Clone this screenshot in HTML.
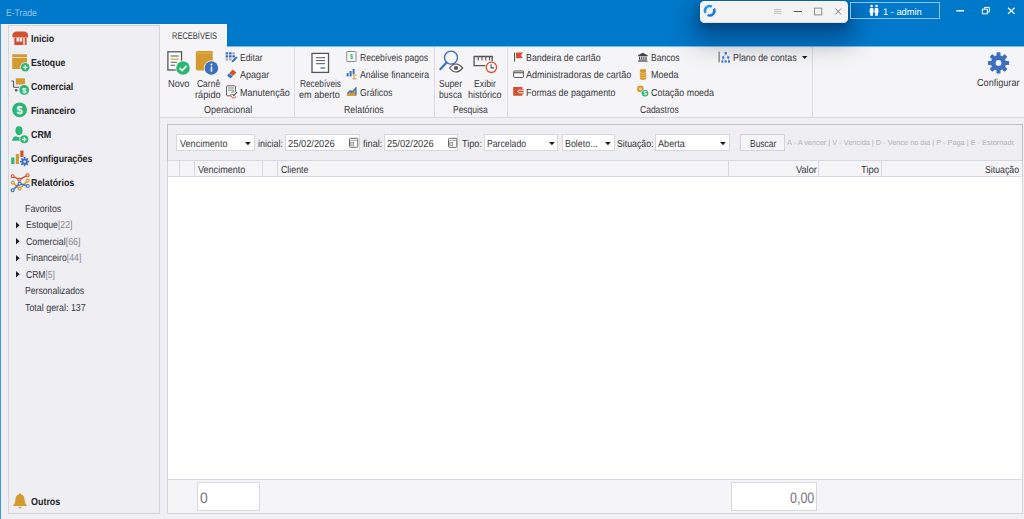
<!DOCTYPE html><html lang="pt-BR"><head><meta charset="utf-8"><title>E-Trade</title><style>

html,body{margin:0;padding:0}
body{width:1024px;height:519px;overflow:hidden;background:#f0eff4;position:relative;font-family:"Liberation Sans",sans-serif;color:#38383d}
#app div,#app span.t,#app svg{position:absolute;box-sizing:border-box}
#app{position:absolute;left:0;top:0;width:1024px;height:519px;overflow:hidden}
span.t{text-rendering:geometricPrecision;white-space:nowrap;line-height:14px;height:14px;transform-origin:0 50%;display:block}
.inp{background:#fff;border:1px solid #d6d6de}
.arr{width:0;height:0;border-left:2.9px solid transparent;border-right:2.9px solid transparent;border-top:3.2px solid #1e1e1e}
.vsep{width:1px;background:#dcdce4}

</style></head><body><div id="app">
<div style="left:160px;top:24px;width:864px;height:93px;background:#f5f5f7"></div>
<div style="left:0px;top:0px;width:1024px;height:24px;background:#0079cb"></div>
<div style="left:227px;top:24px;width:797px;height:22px;background:#0079cb"></div>
<div style="left:227px;top:46px;width:797px;height:1px;background:#7ab8e2"></div>
<div style="left:0px;top:24px;width:1px;height:495px;background:#3b98d9"></div>
<div style="left:8px;top:25px;width:152px;height:489px;background:#efeef3;border:1px solid #d4d4dd"></div>
<div style="left:160px;top:117px;width:864px;height:1px;background:#d9d9e3"></div>
<div style="left:294px;top:47px;width:1px;height:70px;background:#dcdce4"></div>
<div style="left:433.6px;top:47px;width:1.0px;height:70px;background:#dcdce4"></div>
<div style="left:507px;top:47px;width:1px;height:70px;background:#dcdce4"></div>
<div style="left:811.6px;top:47px;width:1.0px;height:70px;background:#dcdce4"></div>
<div style="left:167px;top:160px;width:856px;height:354px;background:#fff;border:1px solid #d4d4dd"></div>
<div style="left:167px;top:124px;width:856px;height:37px;background:#efeef3;border:1px solid #c1c1c6;border-bottom:0"></div>
<div style="left:168px;top:160px;width:854px;height:17px;background:#f5f5f7;border-top:1px solid #d8d8e2;border-bottom:1px solid #d8d8e2"></div>
<div style="left:179px;top:161px;width:1px;height:15px;background:#d8d8e2"></div>
<div style="left:194px;top:161px;width:1px;height:15px;background:#d8d8e2"></div>
<div style="left:262px;top:161px;width:1px;height:15px;background:#d8d8e2"></div>
<div style="left:277px;top:161px;width:1px;height:15px;background:#d8d8e2"></div>
<div style="left:728px;top:161px;width:1px;height:15px;background:#d8d8e2"></div>
<div style="left:818px;top:161px;width:1px;height:15px;background:#d8d8e2"></div>
<div style="left:881px;top:161px;width:1px;height:15px;background:#d8d8e2"></div>
<div style="left:168px;top:479px;width:854px;height:34px;background:#f5f5f7;border-top:1px solid #d8d8e2"></div>
<div style="left:197px;top:482px;width:63px;height:29px;background:#fff;border:1px solid #d8d8e2"></div>
<div style="left:731px;top:482px;width:86px;height:29px;background:#fff;border:1px solid #d8d8e2"></div>
<div class="inp" style="left:176.2px;top:134.3px;width:78.60px;height:16.30px"></div><svg style="left:244.2px;top:140.7px" width="7.8" height="5.2" viewBox="-1 -1 7.8 5.2" aria-hidden="true"><path d="M0 0 H5.8 L2.9 3.2Z" fill="#1c1c1c"/></svg>
<div class="inp" style="left:285px;top:134.3px;width:74.60px;height:16.30px"></div>
<div class="inp" style="left:384.1px;top:134.3px;width:74.40px;height:16.30px"></div>
<div class="inp" style="left:484.1px;top:134.3px;width:74.40px;height:16.30px"></div><svg style="left:548.1px;top:140.7px" width="7.8" height="5.2" viewBox="-1 -1 7.8 5.2" aria-hidden="true"><path d="M0 0 H5.8 L2.9 3.2Z" fill="#1c1c1c"/></svg>
<div class="inp" style="left:562px;top:134.3px;width:52.50px;height:16.30px"></div><svg style="left:603.8px;top:140.7px" width="7.8" height="5.2" viewBox="-1 -1 7.8 5.2" aria-hidden="true"><path d="M0 0 H5.8 L2.9 3.2Z" fill="#1c1c1c"/></svg>
<div class="inp" style="left:655.4px;top:134.3px;width:74.35px;height:16.30px"></div><svg style="left:719.4px;top:140.7px" width="7.8" height="5.2" viewBox="-1 -1 7.8 5.2" aria-hidden="true"><path d="M0 0 H5.8 L2.9 3.2Z" fill="#1c1c1c"/></svg>
<div style="left:740.25px;top:134.3px;width:44.5px;height:16.299999999999983px;background:#f5f5f7;border:1px solid #d2d2da"></div>
<svg style="left:800.6px;top:55.2px" width="7.4" height="5.1" viewBox="-1 -1 7.4 5.1" aria-hidden="true"><path d="M0 0 H5.4 L2.7 3.1Z" fill="#1c1c1c"/></svg>
<svg style="left:14.8px;top:220.85px" width="5.6" height="8.4" viewBox="-1 -1 5.6 8.4" aria-hidden="true"><path d="M0 0 L3.6 3.2 L0 6.4Z" fill="#1c1c1c"/></svg>
<svg style="left:14.8px;top:237.30px" width="5.6" height="8.4" viewBox="-1 -1 5.6 8.4" aria-hidden="true"><path d="M0 0 L3.6 3.2 L0 6.4Z" fill="#1c1c1c"/></svg>
<svg style="left:14.8px;top:253.75px" width="5.6" height="8.4" viewBox="-1 -1 5.6 8.4" aria-hidden="true"><path d="M0 0 L3.6 3.2 L0 6.4Z" fill="#1c1c1c"/></svg>
<svg style="left:14.8px;top:270.20px" width="5.6" height="8.4" viewBox="-1 -1 5.6 8.4" aria-hidden="true"><path d="M0 0 L3.6 3.2 L0 6.4Z" fill="#1c1c1c"/></svg>
<div style="left:700px;top:1px;width:148px;height:22px;background:#f3f3f4;border-radius:4.5px;border:1px solid #fafafa;border-bottom-color:#dedee0;box-shadow:0 11px 26px 7px rgba(0,22,60,.40),0 3px 8px rgba(0,20,55,.34)"></div>
<div style="left:850px;top:2px;width:90px;height:17px;border:1px solid #8ec3ec"></div>
<svg style="left:11px;top:30px" width="19" height="17" viewBox="11 30 19 17" aria-hidden="true">
<path d="M12.3 36.2 Q12.3 31.5 17 31.5 H23.5 Q28.2 31.5 28.2 36.2 Q28.2 37.6 26.9 37.6 Q25.6 37.6 25.4 36.4 Q25.2 37.6 24 37.6 Q22.8 37.6 22.6 36.4 Q22.4 37.6 21.2 37.6 Q20 37.6 19.8 36.4 Q19.6 37.6 18.4 37.6 Q17.2 37.6 17 36.4 Q16.8 37.6 15.6 37.6 Q14.4 37.6 14.2 36.4 Q14 37.6 13.3 37.6 Q12.3 37.6 12.3 36.2Z" fill="#d2502f"/>
<path d="M14.3 37.6 H23.3 V45 H14.3Z" fill="#d2502f"/>
<rect x="16.5" y="37.7" width="2.5" height="3.9" fill="#efeef3"/><rect x="19.6" y="37.7" width="2.5" height="3.9" fill="#efeef3"/>
<rect x="24.7" y="37.6" width="1.9" height="7.4" fill="#d2502f"/></svg>
<svg style="left:11px;top:53px" width="20" height="20" viewBox="11 53 20 20" aria-hidden="true">
<rect x="12.2" y="54.2" width="14.8" height="3" rx=".5" fill="#d39b2e"/>
<rect x="12.2" y="58" width="14.8" height="11" rx=".5" fill="#d39b2e"/>
<circle cx="25.2" cy="67.3" r="5" fill="#efeef3"/>
<circle cx="25.2" cy="67.3" r="4.25" fill="#2bb673"/>
<path d="M25.2 65 V69.6 M22.9 67.3 H27.5" stroke="#fff" stroke-width="1.1"/></svg>
<svg style="left:10px;top:76px" width="21" height="21" viewBox="10 76 21 21" aria-hidden="true">
<rect x="15.8" y="78.2" width="9.2" height="6.2" rx=".5" fill="#d39b2e"/>
<path d="M11.3 81 H13.6 V87.3 H20" stroke="#555" stroke-width="1" fill="none"/>
<circle cx="16.2" cy="90.3" r="1.3" fill="#555"/>
<circle cx="24.2" cy="90" r="5.6" fill="#efeef3"/>
<circle cx="24.2" cy="90" r="4.9" fill="#2bb673"/>
<text x="24.2" y="92.9" font-size="8" font-weight="700" text-anchor="middle" fill="#fff" font-family="Liberation Sans, sans-serif">$</text></svg>
<svg style="left:11px;top:101px" width="19" height="19" viewBox="11 101 19 19" aria-hidden="true">
<circle cx="19.6" cy="109.8" r="7.4" fill="#2bb673"/>
<text x="19.6" y="113.7" font-size="11" font-weight="700" text-anchor="middle" fill="#fff" font-family="Liberation Sans, sans-serif">$</text></svg>
<svg style="left:11px;top:125px" width="20" height="20" viewBox="11 125 20 20" aria-hidden="true">
<ellipse cx="19" cy="130.6" rx="3.6" ry="4.4" fill="#2bb673"/>
<path d="M12.2 140.8 Q12.2 136.6 16 136.2 L19 137.6 L22 136.2 Q25.8 136.6 25.8 140.8Z" fill="#2bb673"/>
<circle cx="24.3" cy="139.3" r="4.7" fill="#efeef3"/>
<circle cx="24.3" cy="139.3" r="4" fill="#2bb673"/>
<path d="M24.3 136.9 V141.7 M21.9 139.3 H26.7" stroke="#fff" stroke-width="1.1"/></svg>
<svg style="left:10px;top:149px" width="21" height="20" viewBox="10 149 21 20" aria-hidden="true">
<rect x="11.2" y="157.5" width="3.2" height="6.5" fill="#2bb673"/>
<rect x="15.8" y="154" width="3.2" height="10" fill="#d39b2e"/>
<rect x="20.3" y="150.5" width="3.2" height="6.5" fill="#d2502f"/>
<g transform="translate(24.6 161.6)" fill="#3d6fc1">
<circle r="3.1"/>
<g id="cg"><rect x="-.8" y="-4.6" width="1.6" height="9.2"/><rect x="-.8" y="-4.6" width="1.6" height="9.2" transform="rotate(45)"/><rect x="-.8" y="-4.6" width="1.6" height="9.2" transform="rotate(90)"/><rect x="-.8" y="-4.6" width="1.6" height="9.2" transform="rotate(135)"/></g>
<circle r="1.2" fill="#efeef3"/></g></svg>
<svg style="left:10px;top:172px" width="21" height="21" viewBox="10 172 21 21" aria-hidden="true">
<g fill="none" stroke-width="1.5">
<path d="M12.6 176.2 L19.4 179.6 L27.6 175.2" stroke="#d2502f"/>
<path d="M12.8 182.6 L19.6 188.6 L27.8 180.6" stroke="#d39b2e"/>
<path d="M12.6 190.2 L19.6 183.6 L27.8 186" stroke="#3d6fc1"/>
</g>
<g fill="#efeef3" stroke-width="1.1">
<circle cx="12.6" cy="176.2" r="1.5" stroke="#d2502f"/><circle cx="19.4" cy="179.6" r="1.5" stroke="#d2502f"/><circle cx="27.6" cy="175.2" r="1.5" stroke="#d2502f"/>
<circle cx="12.8" cy="182.6" r="1.5" stroke="#d39b2e"/><circle cx="19.6" cy="188.6" r="1.5" stroke="#d39b2e"/><circle cx="27.8" cy="180.6" r="1.5" stroke="#d39b2e"/>
<circle cx="12.6" cy="190.2" r="1.5" stroke="#3d6fc1"/><circle cx="19.6" cy="183.6" r="1.5" stroke="#3d6fc1"/><circle cx="27.8" cy="186" r="1.5" stroke="#3d6fc1"/>
</g></svg>
<svg style="left:12px;top:492px" width="17" height="18" viewBox="12 492 17 18" aria-hidden="true">
<path d="M20 493.2 Q21 493.2 21 494.3 Q24.6 495.3 24.6 499.8 Q24.6 503.6 26.8 505.2 V506 H13.2 V505.2 Q15.4 503.6 15.4 499.8 Q15.4 495.3 19 494.3 Q19 493.2 20 493.2Z" fill="#d39b2e"/>
<path d="M18.6 506.8 H21.4 Q21.4 508.4 20 508.4 Q18.6 508.4 18.6 506.8Z" fill="#d39b2e"/></svg>
<svg style="left:166px;top:50px" width="26" height="27" viewBox="166 50 26 27" aria-hidden="true">
<rect x="167.9" y="51.8" width="13.6" height="18.2" fill="#fff" stroke="#555" stroke-width="1.3"/>
<path d="M170.6 56 H178.8 M170.6 62.2 H177 M170.6 65.3 H175" stroke="#555" stroke-width="1.1"/>
<path d="M170.6 59.1 H178.8" stroke="#d39b2e" stroke-width="1.2"/>
<circle cx="183" cy="68" r="7.6" fill="#f5f5f7"/>
<circle cx="183" cy="68" r="6.8" fill="#2bb673"/>
<path d="M179.6 68 L182.2 70.6 L186.6 65.8" stroke="#fff" stroke-width="1.7" fill="none"/></svg>
<svg style="left:194px;top:50px" width="27" height="27" viewBox="194 50 27 27" aria-hidden="true">
<path d="M197.8 51 H212.7 V70.5 H197.8 Q195.8 70.5 195.8 68.5 V53 Q195.8 51 197.8 51Z" fill="#d39b2e"/>
<path d="M197 53.2 H212.7" stroke="#e7bd6a" stroke-width=".7"/>
<circle cx="211.4" cy="68" r="7.6" fill="#f5f5f7"/>
<circle cx="211.4" cy="68" r="6.8" fill="#3d6fc1"/>
<rect x="210.7" y="66.6" width="1.5" height="5" fill="#fff"/><circle cx="211.45" cy="64.4" r="1" fill="#fff"/></svg>
<svg style="left:310px;top:51px" width="21" height="24" viewBox="310 51 21 24" aria-hidden="true">
<rect x="312" y="53.4" width="16.5" height="19" fill="#fff" stroke="#555" stroke-width="1.3"/>
<path d="M315.8 57.7 H325.1 M315.8 60.6 H325.1 M315.8 63.7 H325.1" stroke="#555" stroke-width="1"/>
<path d="M320.5 68 H325.1" stroke="#3d6fc1" stroke-width="1.3"/></svg>
<svg style="left:438px;top:48px" width="27" height="27" viewBox="438 48 27 27" aria-hidden="true">
<circle cx="451" cy="57.6" r="6.5" fill="none" stroke="#3d6fc1" stroke-width="1.4"/>
<path d="M446.6 62.6 L440.3 69.2" stroke="#3d6fc1" stroke-width="2.2" stroke-linecap="round"/>
<path d="M449.6 68 Q456 60 462.6 68 Q456 76 449.6 68Z" fill="#f5f5f7" stroke="#555" stroke-width="1.2"/>
<circle cx="456" cy="68" r="2.1" fill="#555"/></svg>
<svg style="left:472px;top:54px" width="27" height="21" viewBox="472 54 27 21" aria-hidden="true">
<path d="M474.1 56.5 H492.2 V65.7 H474.1Z" fill="none" stroke="#555" stroke-width="1.3"/>
<path d="M478.2 56.5 V60.6 M482 56.5 V60.6 M485.8 56.5 V60.6 M489.6 56.5 V60.6" stroke="#555" stroke-width="1.1"/>
<circle cx="491.4" cy="67.3" r="6.3" fill="#f5f5f7"/>
<circle cx="491.4" cy="67.3" r="5.2" fill="#f5f5f7" stroke="#d2502f" stroke-width="1.3"/>
<path d="M491.1 64.2 V67.9 H494" fill="none" stroke="#555" stroke-width="1.1"/></svg>
<svg style="left:986px;top:50px" width="25" height="26" viewBox="986 50 25 26" aria-hidden="true">
<g transform="translate(998.5 62.9)" fill="#3d6fc1">
<circle r="7.6"/>
<rect x="-2" y="-10.6" width="4" height="21.2" rx=".6"/><rect x="-2" y="-10.6" width="4" height="21.2" rx=".6" transform="rotate(45)"/><rect x="-2" y="-10.6" width="4" height="21.2" rx=".6" transform="rotate(90)"/><rect x="-2" y="-10.6" width="4" height="21.2" rx=".6" transform="rotate(135)"/>
<circle r="2.9" fill="#f5f5f7"/></g></svg>
<svg style="left:225px;top:51px" width="14" height="13" viewBox="225 51 14 13" aria-hidden="true">
<g fill="#3d6fc1"><rect x="225.6" y="52.3" width="2.6" height="2.2"/><rect x="229" y="52.3" width="2.6" height="2.2"/><rect x="225.6" y="55.3" width="2.6" height="2.2"/><rect x="229" y="55.3" width="2.6" height="2.2"/><rect x="232.4" y="55.3" width="2.6" height="2.2"/></g>
<g fill="#a8a8b0"><rect x="232.4" y="52.3" width="2.6" height="2.2"/><rect x="225.6" y="58.3" width="2.6" height="2.2"/><rect x="229" y="58.3" width="2.6" height="2.2"/></g>
<path d="M231.6 62.4 L232.2 60.2 L236.2 56.4 L237.6 57.8 L233.6 61.8Z" fill="#3d6fc1"/></svg>
<svg style="left:226px;top:68px" width="12" height="12" viewBox="226 68 12 12" aria-hidden="true">
<path d="M232.8 69.6 L236.4 72.6 L232.9 75.9 L229.3 72.9Z" fill="#d2502f"/>
<path d="M229 73.2 L232.6 76.2 L230.6 78.4 L227 75.4Z" fill="#3d6fc1"/></svg>
<svg style="left:225px;top:84px" width="14" height="15" viewBox="225 84 14 15" aria-hidden="true">
<rect x="226.5" y="85.8" width="9" height="10" rx=".8" fill="#f5f5f7" stroke="#666" stroke-width="1"/>
<path d="M228 88 H234 M228 90.2 H234" stroke="#888" stroke-width="1"/>
<circle cx="233.8" cy="94.6" r="3.4" fill="#f5f5f7"/>
<path d="M231.2 93.8 A2.7 2.7 0 0 0 236 96.6" fill="none" stroke="#d2502f" stroke-width="1"/>
<path d="M231.4 92.6 A2.7 2.7 0 0 1 234.5 92" fill="none" stroke="#2bb673" stroke-width="1"/>
<path d="M232.6 94.2 L233.8 95.6 L237 91.8" fill="none" stroke="#555" stroke-width="1.1"/></svg>
<svg style="left:345px;top:50px" width="13" height="13" viewBox="345 50 13 13" aria-hidden="true">
<rect x="346.8" y="51.5" width="9.2" height="10" rx=".6" fill="#fff" stroke="#888" stroke-width="1"/>
<text x="351.4" y="59.2" font-size="7.4" font-weight="700" textLength="3.4" lengthAdjust="spacingAndGlyphs" text-anchor="middle" fill="#2bb673" font-family="Liberation Sans, sans-serif">$</text></svg>
<svg style="left:345px;top:68px" width="13" height="12" viewBox="345 68 13 12" aria-hidden="true">
<rect x="346.6" y="73" width="2" height="3.4" fill="#3d6fc1"/><rect x="349.6" y="71" width="2" height="5.4" fill="#3d6fc1"/><rect x="352.6" y="69" width="2" height="5" fill="#3d6fc1"/>
<path d="M356.6 75 H352.8 L354.6 76.9 L352.8 78.8 H356.6" fill="none" stroke="#d39b2e" stroke-width="1"/></svg>
<svg style="left:345px;top:85px" width="13" height="12" viewBox="345 85 13 12" aria-hidden="true">
<path d="M347.2 92.5 L350 90.2 L352.6 90.8 L356.6 86.2 V95.6 H347.2Z" fill="#3d6fc1"/>
<path d="M346.4 95.7 L349.4 92 L352 93 L355.4 89.4 V95.7Z" fill="#d39b2e"/></svg>
<svg style="left:513px;top:51px" width="12" height="12" viewBox="513 51 12 12" aria-hidden="true">
<rect x="514" y="52.6" width="1.1" height="9" fill="#555"/>
<path d="M516.1 52.5 H522.9 L520.9 55.4 L522.9 58.3 H516.1Z" fill="#d2502f"/></svg>
<svg style="left:512px;top:69px" width="13" height="10" viewBox="512 69 13 10" aria-hidden="true">
<rect x="513.7" y="71" width="9.7" height="6.4" rx=".6" fill="#fff" stroke="#555" stroke-width="1"/>
<rect x="513.7" y="72.2" width="9.7" height="1.1" fill="#555"/></svg>
<svg style="left:512px;top:86px" width="13" height="11" viewBox="512 86 13 11" aria-hidden="true">
<path d="M513.2 87 H522.4 V89 H523.6 V94 H522.4 V95.8 H513.2Z" fill="#d2502f"/>
<path d="M523.6 90.2 H519.4 Q518 90.2 518 91.5 Q518 92.8 519.4 92.8 H523.6" fill="none" stroke="#fff" stroke-width=".9"/></svg>
<svg style="left:637px;top:51px" width="12" height="12" viewBox="637 51 12 12" aria-hidden="true">
<path d="M642.8 52.7 L647.6 55.3 V56.2 H638 V55.3Z" fill="#444"/>
<path d="M639.6 56.8 V59.6 M641.7 56.8 V59.6 M643.9 56.8 V59.6 M646 56.8 V59.6" stroke="#444" stroke-width="1.1"/>
<rect x="638.8" y="59.6" width="8" height=".9" fill="#444"/><rect x="638" y="60.7" width="9.6" height=".9" fill="#444"/></svg>
<svg style="left:639px;top:68px" width="8" height="13" viewBox="639 68 8 13" aria-hidden="true">
<rect x="639.9" y="70.4" width="6.2" height="8.2" fill="#d39b2e"/>
<ellipse cx="643" cy="70.4" rx="3.1" ry="1.4" fill="#d39b2e"/><ellipse cx="643" cy="78.6" rx="3.1" ry="1.4" fill="#d39b2e"/>
<path d="M639.9 72.6 Q643 74.4 646.1 72.6 M639.9 74.8 Q643 76.6 646.1 74.8 M639.9 77 Q643 78.8 646.1 77" fill="none" stroke="#efd193" stroke-width=".6"/></svg>
<svg style="left:636px;top:85px" width="14" height="13" viewBox="636 85 14 13" aria-hidden="true">
<circle cx="640.4" cy="88.9" r="3.3" fill="#d39b2e"/>
<circle cx="640.4" cy="88.9" r="1.3" fill="#f0d9a6"/>
<circle cx="645" cy="93.3" r="3.9" fill="#f5f5f7"/>
<circle cx="645" cy="93.3" r="3.3" fill="#2bb673"/>
<text x="645" y="95.4" font-size="5.6" font-weight="700" text-anchor="middle" fill="#fff" font-family="Liberation Sans, sans-serif">$</text></svg>
<svg style="left:718px;top:51px" width="13" height="13" viewBox="718 51 13 13" aria-hidden="true">
<rect x="718.6" y="51.7" width="1" height="10.6" fill="#555"/>
<g fill="#3d6fc1"><rect x="724.6" y="52" width="2.2" height="2.2"/><circle cx="723.2" cy="57.4" r="1.2"/><circle cx="728.2" cy="57.4" r="1.2"/>
<rect x="721.4" y="60.4" width="2" height="2.2"/><rect x="724.7" y="60.4" width="2" height="2.2"/><rect x="728" y="60.4" width="2" height="2.2"/></g>
<path d="M725.7 54 L723.2 57 M725.7 54 L728.2 57 M723.2 58 L722.4 60.6 M723.2 58 L725.7 60.6 M728.2 58 L729 60.6" stroke="#3d6fc1" stroke-width=".6" stroke-dasharray=".7 .5"/></svg>
<svg style="left:347.5px;top:136px" width="12.0" height="14" viewBox="347.5 136 12.0 14" aria-hidden="true">
<rect x="349.0" y="138.3" width="8.3" height="9" rx="1" fill="#fff" stroke="#666" stroke-width="1"/>
<path d="M349.0 140.6 H357.3" stroke="#888" stroke-width=".7"/>
<rect x="350.2" y="142.3" width="3" height="3" fill="#d8d8dc" stroke="#777" stroke-width=".6"/></svg>
<svg style="left:446.5px;top:136px" width="12.0" height="14" viewBox="446.5 136 12.0 14" aria-hidden="true">
<rect x="448.0" y="138.3" width="8.3" height="9" rx="1" fill="#fff" stroke="#666" stroke-width="1"/>
<path d="M448.0 140.6 H456.3" stroke="#888" stroke-width=".7"/>
<rect x="449.2" y="142.3" width="3" height="3" fill="#d8d8dc" stroke="#777" stroke-width=".6"/></svg>
<svg style="left:869px;top:4px" width="11" height="13" viewBox="869 4 11 13" aria-hidden="true">
<g fill="#fff"><circle cx="871.6" cy="6" r="1.3"/><circle cx="876.5" cy="6" r="1.3"/>
<path d="M870 8 H873.2 L873.8 12.4 H872.9 V15.8 H870.3 V12.4 H869.4Z"/><path d="M874.9 8 H878.1 L878.7 12.4 H877.8 V15.8 H875.2 V12.4 H874.3Z"/></g></svg>
<svg style="left:955px;top:9px" width="11" height="4" viewBox="955 9 11 4" aria-hidden="true"><rect x="956.3" y="10" width="7.8" height="1.5" fill="#fff"/></svg>
<svg style="left:981px;top:6px" width="10" height="9" viewBox="981 6 10 9" aria-hidden="true"><g fill="none" stroke="#fff" stroke-width="1"><rect x="982.4" y="9.2" width="5" height="4.6"/><path d="M984.4 9 V7.4 H989.4 V12 H987.6"/></g></svg>
<svg style="left:1006px;top:6px" width="10" height="9" viewBox="1006 6 10 9" aria-hidden="true"><path d="M1008 7.7 L1014.6 13.9 M1014.6 7.7 L1008 13.9" stroke="#fff" stroke-width="1.2"/></svg>
<svg style="left:702px;top:3px" width="16" height="16" viewBox="702 3 16 16" aria-hidden="true">
<path d="M705.51 12.93 A4.7 4.7 0 0 1 711.83 6.61" fill="none" stroke="#2293ea" stroke-width="2.5"/>
<path d="M713.89 8.67 A4.7 4.7 0 0 1 707.57 14.99" fill="none" stroke="#1878dd" stroke-width="2.5"/></svg>
<svg style="left:772px;top:6px" width="72" height="11" viewBox="772 6 72 11" aria-hidden="true">
<path d="M774 9.6 H781.4 M774 11.5 H781.4 M774 13.4 H781.4" stroke="#b2b2b6" stroke-width=".8"/>
<path d="M793.8 11.5 H802" stroke="#333" stroke-width=".8"/>
<rect x="814.4" y="8.1" width="7.4" height="6.8" fill="none" stroke="#777" stroke-width=".8"/>
<path d="M835.4 8.6 L841 14.4 M841 8.6 L835.4 14.4" stroke="#5a5a5a" stroke-width=".8"/></svg>
<span class="t" style="left:5.50px;top:7.00px;font-size:9.6px;color:#97c5eb;transform:scaleX(0.8976);">E-Trade</span>
<span class="t" style="left:882.50px;top:6.00px;font-size:9.5px;color:#ffffff;transform:scaleX(0.9796);">1 - admin</span>
<span class="t" style="left:31.00px;top:33.25px;font-size:10.2px;font-weight:700;color:#222;transform:scaleX(0.8756);">Inicio</span>
<span class="t" style="left:31.00px;top:57.25px;font-size:10.2px;font-weight:700;color:#222;transform:scaleX(0.8532);">Estoque</span>
<span class="t" style="left:31.00px;top:81.25px;font-size:10.2px;font-weight:700;color:#222;transform:scaleX(0.8586);">Comercial</span>
<span class="t" style="left:31.00px;top:105.25px;font-size:10.2px;font-weight:700;color:#222;transform:scaleX(0.8599);">Financeiro</span>
<span class="t" style="left:31.00px;top:129.25px;font-size:10.2px;font-weight:700;color:#222;transform:scaleX(0.8749);">CRM</span>
<span class="t" style="left:31.00px;top:153.25px;font-size:10.2px;font-weight:700;color:#222;transform:scaleX(0.8594);">Configurações</span>
<span class="t" style="left:31.00px;top:177.25px;font-size:10.2px;font-weight:700;color:#222;transform:scaleX(0.8690);">Relatórios</span>
<span class="t" style="left:31.00px;top:496.25px;font-size:10.2px;font-weight:700;color:#222;transform:scaleX(0.8771);">Outros</span>
<span class="t" style="left:25.10px;top:202.80px;font-size:10.2px;transform:scaleX(0.8638);">Favoritos</span>
<span class="t" style="left:25.60px;top:219.25px;font-size:10.2px;transform:scaleX(0.8531);">Estoque<span style="color:#8a8a92">[22]</span></span>
<span class="t" style="left:25.60px;top:235.70px;font-size:10.2px;transform:scaleX(0.8654);">Comercial<span style="color:#8a8a92">[66]</span></span>
<span class="t" style="left:25.60px;top:252.15px;font-size:10.2px;transform:scaleX(0.8579);">Financeiro<span style="color:#8a8a92">[44]</span></span>
<span class="t" style="left:25.60px;top:268.60px;font-size:10.2px;transform:scaleX(0.8369);">CRM<span style="color:#8a8a92">[5]</span></span>
<span class="t" style="left:25.10px;top:285.05px;font-size:10.2px;transform:scaleX(0.8499);">Personalizados</span>
<span class="t" style="left:25.10px;top:301.50px;font-size:10.2px;transform:scaleX(0.8712);">Total geral: 137</span>
<span class="t" style="left:171.70px;top:30.10px;font-size:9.6px;transform:scaleX(0.7813);">RECEBÍVEIS</span>
<span class="t" style="left:167.50px;top:77.70px;font-size:10.2px;transform:scaleX(0.9035);">Novo</span>
<span class="t" style="left:196.70px;top:77.70px;font-size:10.2px;transform:scaleX(0.8324);">Carnê</span>
<span class="t" style="left:195.20px;top:88.80px;font-size:10.2px;transform:scaleX(0.9072);">rápido</span>
<span class="t" style="left:240.10px;top:52.00px;font-size:10.2px;transform:scaleX(0.8526);">Editar</span>
<span class="t" style="left:240.10px;top:69.30px;font-size:10.2px;transform:scaleX(0.8886);">Apagar</span>
<span class="t" style="left:240.10px;top:86.50px;font-size:10.2px;transform:scaleX(0.8863);">Manutenção</span>
<span class="t" style="left:203.50px;top:104.10px;font-size:10.2px;transform:scaleX(0.8774);">Operacional</span>
<span class="t" style="left:299.50px;top:77.70px;font-size:10.2px;transform:scaleX(0.8134);">Recebíveis</span>
<span class="t" style="left:299.00px;top:88.80px;font-size:10.2px;transform:scaleX(0.8916);">em aberto</span>
<span class="t" style="left:360.20px;top:52.00px;font-size:10.2px;transform:scaleX(0.8409);">Recebíveis pagos</span>
<span class="t" style="left:360.20px;top:69.30px;font-size:10.2px;transform:scaleX(0.8592);">Análise financeira</span>
<span class="t" style="left:360.20px;top:86.50px;font-size:10.2px;transform:scaleX(0.8540);">Gráficos</span>
<span class="t" style="left:344.10px;top:104.10px;font-size:10.2px;transform:scaleX(0.8654);">Relatórios</span>
<span class="t" style="left:438.90px;top:77.70px;font-size:10.2px;transform:scaleX(0.8460);">Super</span>
<span class="t" style="left:438.90px;top:88.80px;font-size:10.2px;transform:scaleX(0.8460);">busca</span>
<span class="t" style="left:474.00px;top:77.70px;font-size:10.2px;transform:scaleX(0.8594);">Exibir</span>
<span class="t" style="left:468.20px;top:88.80px;font-size:10.2px;transform:scaleX(0.8857);">histórico</span>
<span class="t" style="left:453.40px;top:104.10px;font-size:10.2px;transform:scaleX(0.8301);">Pesquisa</span>
<span class="t" style="left:526.20px;top:52.00px;font-size:10.2px;transform:scaleX(0.8665);">Bandeira de cartão</span>
<span class="t" style="left:526.20px;top:69.30px;font-size:10.2px;transform:scaleX(0.8855);">Administradoras de cartão</span>
<span class="t" style="left:526.20px;top:86.50px;font-size:10.2px;transform:scaleX(0.8732);">Formas de pagamento</span>
<span class="t" style="left:651.00px;top:52.00px;font-size:10.2px;transform:scaleX(0.8386);">Bancos</span>
<span class="t" style="left:651.00px;top:69.30px;font-size:10.2px;transform:scaleX(0.8826);">Moeda</span>
<span class="t" style="left:651.00px;top:86.50px;font-size:10.2px;transform:scaleX(0.8758);">Cotação moeda</span>
<span class="t" style="left:639.70px;top:104.10px;font-size:10.2px;transform:scaleX(0.8355);">Cadastros</span>
<span class="t" style="left:732.50px;top:52.00px;font-size:10.2px;transform:scaleX(0.8703);">Plano de contas</span>
<span class="t" style="left:977.10px;top:77.00px;font-size:10.2px;transform:scaleX(0.8933);">Configurar</span>
<span class="t" style="left:179.90px;top:137.70px;font-size:10.2px;transform:scaleX(0.8920);">Vencimento</span>
<span class="t" style="left:258.10px;top:137.70px;font-size:10.2px;transform:scaleX(0.8830);">inicial:</span>
<span class="t" style="left:288.00px;top:137.70px;font-size:10.2px;transform:scaleX(0.9157);">25/02/2026</span>
<span class="t" style="left:362.70px;top:137.70px;font-size:10.2px;transform:scaleX(0.9010);">final:</span>
<span class="t" style="left:387.00px;top:137.70px;font-size:10.2px;transform:scaleX(0.9137);">25/02/2026</span>
<span class="t" style="left:461.70px;top:137.70px;font-size:10.2px;transform:scaleX(0.8976);">Tipo:</span>
<span class="t" style="left:487.00px;top:137.70px;font-size:10.2px;transform:scaleX(0.8523);">Parcelado</span>
<span class="t" style="left:564.90px;top:137.70px;font-size:10.2px;transform:scaleX(0.8719);">Boleto...</span>
<span class="t" style="left:616.70px;top:137.70px;font-size:10.2px;transform:scaleX(0.8591);">Situação:</span>
<span class="t" style="left:658.40px;top:137.70px;font-size:10.2px;transform:scaleX(0.8962);">Aberta</span>
<span class="t" style="left:749.50px;top:137.70px;font-size:10.2px;transform:scaleX(0.8323);">Buscar</span>
<div style="left:787.00px;top:136.00px;width:226.60px;height:14px;overflow:hidden"><span class="t" style="left:0;top:0;font-size:7.4px;color:#b0b0ba;transform:scaleX(0.9948);">A - A vencer | V - Vencida | D - Vence no dia | P - Paga | E - Estornado</span></div>
<span class="t" style="left:197.70px;top:163.80px;font-size:10.2px;transform:scaleX(0.8883);">Vencimento</span>
<span class="t" style="left:280.70px;top:163.80px;font-size:10.2px;transform:scaleX(0.8638);">Cliente</span>
<span class="t" style="left:795.70px;top:163.80px;font-size:10.2px;transform:scaleX(0.9075);">Valor</span>
<span class="t" style="left:860.50px;top:163.80px;font-size:10.2px;transform:scaleX(0.9304);">Tipo</span>
<span class="t" style="left:984.60px;top:163.80px;font-size:10.2px;transform:scaleX(0.8599);">Situação</span>
<span class="t" style="left:200.10px;top:491.50px;font-size:15.2px;color:#74747c;transform:scaleX(0.9109);">0</span>
<span class="t" style="left:789.50px;top:491.50px;font-size:15.2px;color:#74747c;transform:scaleX(0.8220);">0,00</span>
</div></body></html>
